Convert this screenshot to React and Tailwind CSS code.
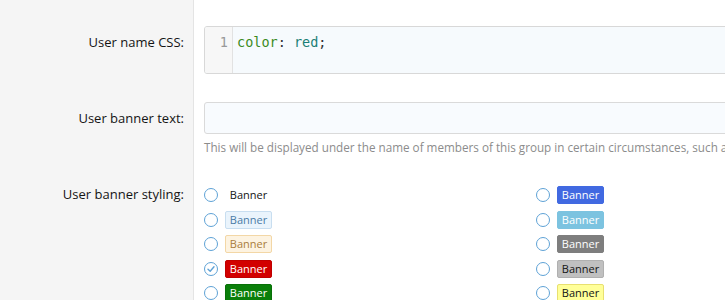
const sans = "font-['Open_Sans',sans-serif]";

const banners = [
  { label: 'Banner', cls: 'bg-transparent border-transparent text-[#141414]' },
  { label: 'Banner', cls: 'bg-[#4169e1] border-[#4169e1] text-white', col: 2 },
  { label: 'Banner', cls: 'bg-[#eaf4fc] border-[#c8def0] text-[#4a7ba6]' },
  { label: 'Banner', cls: 'bg-[#7cc3e0] border-[#7cc3e0] text-white', col: 2 },
  { label: 'Banner', cls: 'bg-[#fdf3e1] border-[#f3d7a6] text-[#a97c3c]' },
  { label: 'Banner', cls: 'bg-[#7e7e7e] border-[#7e7e7e] text-white', col: 2 },
  { label: 'Banner', cls: 'bg-[#d20000] border-[#c00000] text-white', checked: true },
  { label: 'Banner', cls: 'bg-[#c0c0c0] border-[#b0b0b0] text-[#141414]', col: 2 },
  { label: 'Banner', cls: 'bg-[#0a7f0a] border-[#087008] text-white' },
  { label: 'Banner', cls: 'bg-[#ffff99] border-[#e8e070] text-[#141414]', col: 2 },
];

const Radio = ({ checked }) => (
  <span className="w-[14px] h-[14px] rounded-full border-[1.5px] border-[#5ea2d6] bg-white flex items-center justify-center shrink-0">
    {checked && (
      <svg width="8" height="8" viewBox="0 0 8 8" fill="none">
        <path d="M1 4.2 L3.2 6.2 L7 1.8" stroke="#5ea2d6" strokeWidth="1.4" strokeLinecap="round" strokeLinejoin="round" />
      </svg>
    )}
  </span>
);

const Label = ({ children, pt }) => (
  <div className={`w-[194px] shrink-0 bg-[#f5f5f5] border-r border-[#e4e4e4] pr-[9px] text-right text-[13px] leading-[20px] text-[#141414] ${pt}`}>
    {children}
  </div>
);

export default function App() {
  return (
    <div className={`w-[725px] h-[300px] overflow-hidden bg-white flex flex-col ${sans}`}>
      {/* User name CSS */}
      <div className="flex h-[88px] shrink-0">
        <Label pt="pt-[32px]">User name CSS:</Label>
        <div className="pl-[10px] pt-[26px]">
          <div className="w-[600px] h-[48px] flex border border-[#d8d8d8] rounded-[3px] bg-[#f6fafd] overflow-hidden">
            <div className="w-[28px] bg-[#f7f7f7] border-r border-[#e2e2e2] text-right pr-[4px] pt-[5px] font-['DejaVu_Sans_Mono',monospace] text-[13.5px] leading-[20px] text-[#999]">1</div>
            <div className="pl-[4px] pt-[5px] font-['DejaVu_Sans_Mono',monospace] text-[13.5px] leading-[20px] text-[#333]">
              <span className="text-[#3a8a22]">color</span>: <span className="text-[#1a7f76]">red</span>;
            </div>
          </div>
        </div>
      </div>

      {/* User banner text */}
      <div className="flex h-[82px] shrink-0">
        <Label pt="pt-[20px]">User banner text:</Label>
        <div className="pl-[10px] pt-[14px]">
          <div className="w-[600px] h-[32px] border border-[#dadada] rounded-[3px] bg-[#f8fbfe]" />
          <div className="mt-[5px] whitespace-nowrap text-[11.7px] leading-[16px] text-[#8c8c8c]">
            This will be displayed under the name of members of this group in certain circumstances, such as on their profile.
          </div>
        </div>
      </div>

      {/* User banner styling */}
      <div className="flex flex-1 shrink-0">
        <Label pt="pt-[14px]">User banner styling:</Label>
        <div className="pl-[10px] pt-[13px] grid grid-cols-[332px_332px] auto-rows-[24.5px]">
          {banners.map((b, i) => (
            <div key={i} className="flex items-center gap-[7px]">
              <Radio checked={b.checked} />
              <span className={`w-[47px] h-[18px] border rounded-[2px] text-[11px] leading-[16px] text-center ${b.cls}`}>
                {b.label}
              </span>
            </div>
          ))}
        </div>
      </div>
    </div>
  );
}
